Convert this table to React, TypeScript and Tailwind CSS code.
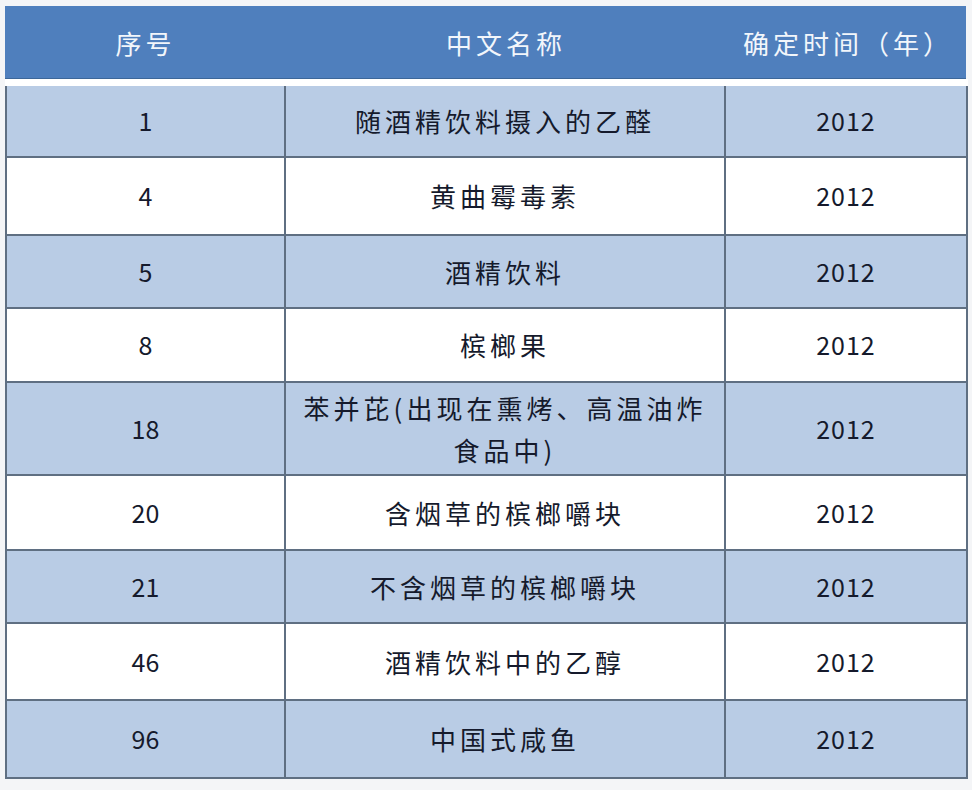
const rows = [
  { no: "1", name: ["随酒精饮料摄入的乙醛"], year: "2012", h: "h-[72px]" },
  { no: "4", name: ["黄曲霉毒素"], year: "2012", h: "h-[78px]" },
  { no: "5", name: ["酒精饮料"], year: "2012", h: "h-[73px]" },
  { no: "8", name: ["槟榔果"], year: "2012", h: "h-[74px]" },
  { no: "18", name: ["苯并芘(出现在熏烤、高温油炸", "食品中)"], year: "2012", h: "h-[93px]" },
  { no: "20", name: ["含烟草的槟榔嚼块"], year: "2012", h: "h-[75px]" },
  { no: "21", name: ["不含烟草的槟榔嚼块"], year: "2012", h: "h-[73px]" },
  { no: "46", name: ["酒精饮料中的乙醇"], year: "2012", h: "h-[77px]" },
  { no: "96", name: ["中国式咸鱼"], year: "2012", h: "h-[78px]" },
];

export default function App() {
  return (
    <div
      className="min-h-screen bg-[#f4f5f7] pt-[6px] pl-[5px]"
      style={{ fontFamily: '"Noto Sans CJK SC", "Noto Sans", sans-serif' }}
    >
      <div className="w-[963px]">
        {/* header */}
        <div className="flex h-[73px] w-[961px] bg-[#4f7fbd] border-b border-[#3d6799] text-[26px] tracking-[4px] text-[#f2f6fb]">
          <div className="w-[281px] flex items-center justify-center">序号</div>
          <div className="w-[440px] flex items-center justify-center">中文名称</div>
          <div className="flex-1 flex items-center justify-center pl-[4px]">确定时间（年）</div>
        </div>
        <div className="h-[7px] bg-white" />

        {/* body */}
        <div className="border-l-2 border-r-2 border-[#5f6f82] text-[#151a2c]">
          {rows.map((r, i) => (
            <div
              key={r.no}
              className={`flex border-b-2 border-[#5f6f82] ${r.h} ${i % 2 === 0 ? "bg-[#b9cce5]" : "bg-white"}`}
            >
              <div className="w-[279px] border-r-2 border-[#5f6f82] flex items-center justify-center text-[25px]">
                {r.no}
              </div>
              <div className="w-[440px] border-r-2 border-[#5f6f82] flex flex-col items-center justify-center text-[26px] tracking-[4px] leading-[42px]">
                {r.name.map((line) => (
                  <div key={line}>{line}</div>
                ))}
              </div>
              <div className="flex-1 flex items-center justify-center text-[25px] tracking-[1px]">
                {r.year}
              </div>
            </div>
          ))}
        </div>
      </div>
    </div>
  );
}
